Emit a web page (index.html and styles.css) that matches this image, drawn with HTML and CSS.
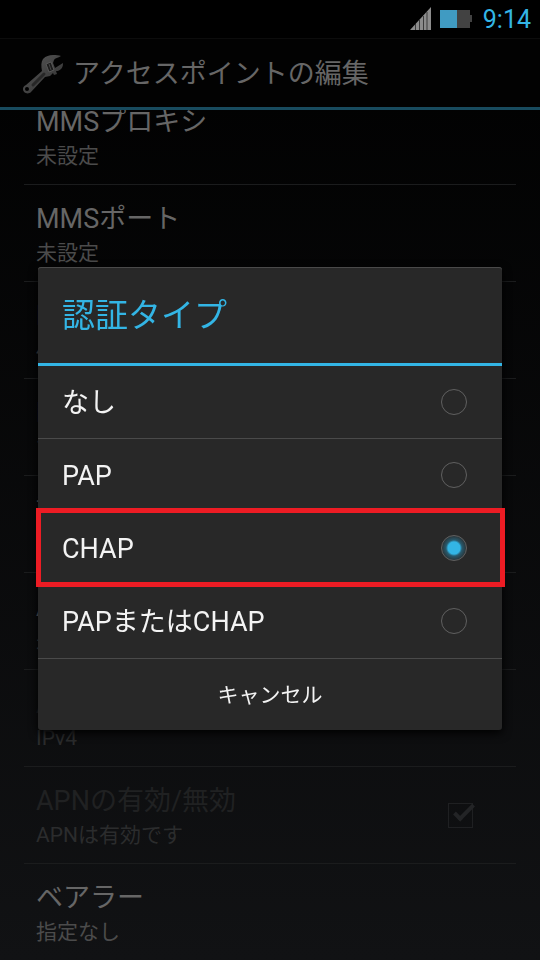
FILE: index.html
```html
<!DOCTYPE html>
<html lang="ja">
<head>
  <meta charset="UTF-8">
  <meta name="viewport" content="width=device-width, initial-scale=1">
  <title>アクセスポイントの編集</title>
  <link rel="stylesheet" href="styles.css">
</head>
<body>

  <div class="statusbar">
    <svg class="signal" width="22" height="24" viewBox="0 0 22 24">
      <path d="M1 23 L22 0 V23 Z" fill="#8c8c8c"/>
      <path d="M6.500 17V23 M10.500 13V23 M14.500 9V23 M18 5V23" stroke="#3a3a3a" stroke-width="1"/>
    </svg>
    <svg class="battery" width="32" height="18" viewBox="0 0 32 18">
      <path d="M0 0H30V5H32V12H30V18H0Z" fill="#424242"/>
      <rect width="17" height="18" fill="#409bc2"/>
    </svg>
    <span class="clock">9:14</span>
  </div>

  <header class="header">
    <svg class="wrench" width="42" height="42" viewBox="0 0 42 42">
      <defs>
        <linearGradient id="metal" x1="0" y1="0" x2="1" y2="1">
          <stop offset="0" stop-color="#5a5a5a"/>
          <stop offset="1" stop-color="#2c2c2c"/>
        </linearGradient>
      </defs>
      <path fill="url(#metal)" d="M20 18 C19 13 19 9 21 6 C24 3 27 2 31 2 C34 2 37 2 39 3 C36 5 33 5 32 7 L31 10 L33 15 L41 10 C41 14 40 16 36 18 L34 18 L35 21 L32 22 L31 20 L28 23 L23 24 L9 39 C6 42 1 40 1 36 C1 34 2 33 4 32 Z"/>
      <path d="M24 11 L29 9 L32 17 L27 19 Z" fill="#1c1c1c" stroke="#585858" stroke-width="1"/>
      <path d="M27 11 L29 17" stroke="#444" stroke-width="1"/>
      <path d="M11 32 L22 21" stroke="#272727" stroke-width="3" stroke-linecap="round"/>
      <circle cx="5" cy="36" r="2" fill="#000"/>
    </svg>
    <h1>アクセスポイントの編集</h1>
  </header>

  <main class="settings">
    <ul class="list">
      <li class="item"><span class="name">MMSプロキシ</span><span class="value">未設定</span></li>
      <li class="item"><span class="name">MMSポート</span><span class="value">未設定</span></li>
      <li class="item"><span class="name">MCC</span><span class="value">440</span></li>
      <li class="item"><span class="name">MNC</span><span class="value">10</span></li>
      <li class="item"><span class="name">認証タイプ</span><span class="value">CHAP</span></li>
      <li class="item"><span class="name">APNタイプ</span><span class="value">未設定</span></li>
      <li class="item disabled"><span class="name">APNプロトコル</span><span class="value">IPv4</span></li>
      <li class="item disabled">
        <label class="name" for="apnEnabled">APNの有効/無効</label>
        <span class="value">APNは有効です</span>
        <input class="check" type="checkbox" id="apnEnabled" checked disabled>
      </li>
      <li class="item"><span class="name">ベアラー</span><span class="value">指定なし</span></li>
    </ul>
  </main>

  <div class="overlay">
    <form class="dialog" role="dialog" aria-labelledby="dialogTitle">
      <h2 id="dialogTitle">認証タイプ</h2>
      <label class="option"><span>なし</span><input type="radio" name="auth"></label>
      <label class="option"><span>PAP</span><input type="radio" name="auth"></label>
      <label class="option highlight"><span>CHAP</span><input type="radio" name="auth" checked></label>
      <label class="option"><span>PAPまたはCHAP</span><input type="radio" name="auth"></label>
      <button class="cancel" type="button">キャンセル</button>
    </form>
  </div>

</body>
</html>
```
FILE: styles.css
```css
* {
  box-sizing: border-box;
}

body {
  margin: 0;
  height: 100vh;
  overflow: hidden;
  display: flex;
  flex-direction: column;
  background: linear-gradient(#000, #111214);
  font-family: Roboto, "Noto Sans CJK JP", sans-serif;
  color: #666;
}

.statusbar {
  height: 38px;
  flex: none;
  display: flex;
  align-items: center;
  justify-content: flex-end;
  gap: 9px;
  padding-right: 9px;
  background: #000;
}

.clock {
  margin-left: 2px;
  padding-top: 2px;
  font-size: 25px;
  line-height: 38px;
  color: #33b5e5;
}

.header {
  height: 72px;
  flex: none;
  display: flex;
  align-items: center;
  gap: 9px;
  padding: 2px 0 0 22px;
  border-top: 1px solid #0c0c0c;
  border-bottom: 3px solid #184b5e;
  background: #020202;
}

.header h1 {
  margin: 0;
  font-size: 27px;
  font-weight: 400;
  line-height: 40px;
}

.settings {
  flex: 1;
  min-height: 0;
  overflow: hidden;
  padding: 0 24px;
}

/* list is scrolled a little under the header */
.list {
  margin: -22px 0 0;
  padding: 0;
  list-style: none;
}

.item {
  height: 97px;
  display: grid;
  grid-template-columns: 1fr auto;
  grid-template-rows: 38px 30px;
  align-content: center;
  padding: 2px 40px 0 12px;
  border-bottom: 1px solid #1b1c1d;
}

.name {
  grid-column: 1;
  font-size: 27px;
  line-height: 38px;
}

.value {
  grid-column: 1;
  font-size: 21px;
  line-height: 30px;
  color: #4b4b4b;
}

.disabled .name {
  color: #202122;
}

.disabled .value {
  color: #2b2c2d;
}

.check {
  grid-column: 2;
  grid-row: 1 / 3;
  align-self: center;
  appearance: none;
  position: relative;
  width: 25px;
  height: 25px;
  margin: 0 3px 2px 0;
  border: 1px solid #1f2022;
}

.check::after {
  content: "";
  position: absolute;
  left: 10px;
  top: -4px;
  width: 6px;
  height: 17px;
  border: solid #232426;
  border-width: 0 4px 4px 0;
  transform: rotate(45deg);
}

.overlay {
  position: fixed;
  inset: 37px 0 0;
  display: flex;
  align-items: center;
  padding: 0 38px;
}

.dialog {
  flex: 1;
  background: #282828;
  border-radius: 3px;
  box-shadow: 0 3px 10px #000, inset 0 1px #4a4a4a;
  color: #f3f3f3;
}

.dialog h2 {
  margin: 0;
  padding: 25px 24px 23px;
  border-bottom: 3px solid #33b5e5;
  font-size: 33px;
  font-weight: 400;
  line-height: 48px;
  color: #33b5e5;
}

.option {
  position: relative;
  display: flex;
  align-items: center;
  justify-content: space-between;
  height: 73px;
  padding: 0 35px 0 24px;
  border-bottom: 1px solid #4a4a4a;
  font-size: 27px;
}

.option span {
  padding-top: 2px;
  line-height: 38px;
}

.option:last-of-type {
  border-bottom-color: transparent;
}

.option input {
  appearance: none;
  width: 26px;
  height: 26px;
  margin: 0;
  border: 1px solid #606060;
  border-radius: 50%;
}

.option input:checked {
  background: radial-gradient(circle, #33b5e5 0 6px, #285a6d 8px, #2a363b 12px);
}

/* red frame round the entry to choose */
.highlight::after {
  content: "";
  position: absolute;
  inset: -4px -3px -3px -2px;
  border: 5px solid #ed1c24;
  z-index: 1;
}

.cancel {
  display: block;
  width: 100%;
  height: 72px;
  border: 0;
  border-top: 1px solid #4a4a4a;
  background: none;
  font: inherit;
  font-size: 21px;
  line-height: 30px;
  color: inherit;
}
```
